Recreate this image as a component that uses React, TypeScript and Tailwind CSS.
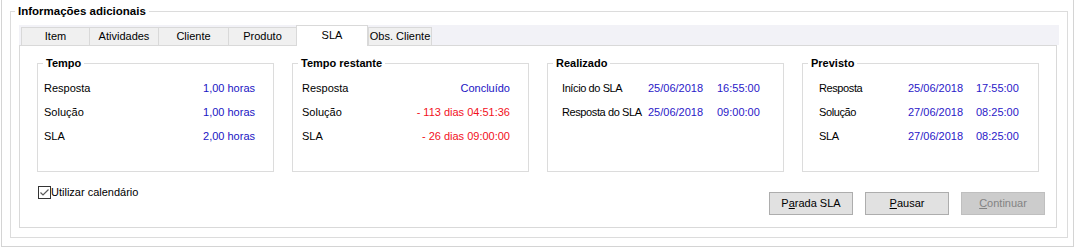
import type { ReactNode } from "react";

const tabs = [
  { label: "Item", w: "w-[68px]" },
  { label: "Atividades", w: "w-[69px]" },
  { label: "Cliente", w: "w-[70px]" },
  { label: "Produto", w: "w-[68px]" },
  { label: "SLA", w: "w-[72px]", active: true },
  { label: "Obs. Cliente", w: "w-[64px]", last: true },
];

function Box({ title, children, className = "" }: { title: string; children: ReactNode; className?: string }) {
  return (
    <fieldset className="w-[237px] h-[116px] border border-[#dcdcdc]">
      <legend className="ml-[5px] px-[3px] font-bold leading-[14px]">{title}</legend>
      <div className={`pt-[6px] ${className}`}>{children}</div>
    </fieldset>
  );
}

function Row({ label, value, red }: { label: string; value: string; red?: boolean }) {
  return (
    <div className="h-[24px] flex items-center justify-between">
      <span>{label}</span>
      <span className={red ? "text-[#f2101c]" : "text-[#1a14c4]"}>{value}</span>
    </div>
  );
}

function DateRow({ label, date, time, cols }: { label: string; date: string; time: string; cols: string }) {
  return (
    <div className={`h-[24px] grid items-center ${cols}`}>
      <span className="whitespace-nowrap tracking-[-0.4px]">{label}</span>
      <span className="text-[#2a18c8]">{date}</span>
      <span className="text-[#2a18c8]">{time}</span>
    </div>
  );
}

function Button({ children, disabled }: { children: ReactNode; disabled?: boolean }) {
  return (
    <div
      className={
        disabled
          ? "w-[84px] h-[23px] border border-[#bfbfbf] bg-[#cccccc] text-[#838383] flex items-center justify-center"
          : "w-[84px] h-[23px] border border-[#adadad] bg-[#e1e1e1] flex items-center justify-center"
      }
    >
      {children}
    </div>
  );
}

export default function App() {
  return (
    <div className="w-[1076px] h-[250px] bg-white pl-[1px] text-[11px] text-black font-['Liberation_Sans',Arial,sans-serif]">
      <div className="w-[1073px] h-[247px] border-x border-b border-[#d4d4d4] pl-[8px] pt-[4px]">
        <fieldset className="w-[1058px] h-[234px] border border-[#dcdcdc]">
          <legend className="ml-[4px] px-[3px] font-bold text-[11.5px] leading-[14px]">Informações adicionais</legend>
          <div className="ml-[8px] mt-[7px] w-[1040px]">
            <div className="h-[20px] bg-[#f2f2f7] flex items-end pl-[2px] w-[1040px]">
              {tabs.map((t) =>
                t.active ? (
                  <div
                    key={t.label}
                    className={`${t.w} h-[21px] -mb-[1px] relative z-10 bg-white border-x border-t border-[#d9d9d9] flex items-start justify-center pt-[3px] leading-[13px]`}
                  >
                    {t.label}
                  </div>
                ) : (
                  <div
                    key={t.label}
                    className={`${t.w} h-[18px] bg-[#f0f0f0] border-l border-t border-[#d9d9d9] flex items-center justify-center ${t.last ? "border-r" : ""}`}
                  >
                    {t.label}
                  </div>
                )
              )}
            </div>
            <div className="w-[1038px] h-[183px] border border-[#d9d9d9] bg-white pl-[17px] pr-[11px] pt-[10px]">
              <div className="flex gap-[18px]">
                <Box title="Tempo" className="pl-[6px] pr-[18px]">
                  <Row label="Resposta" value="1,00 horas" />
                  <Row label="Solução" value="1,00 horas" />
                  <Row label="SLA" value="2,00 horas" />
                </Box>
                <Box title="Tempo restante" className="pl-[9px] pr-[18px]">
                  <Row label="Resposta" value="Concluído" />
                  <Row label="Solução" value="- 113 dias 04:51:36" red />
                  <Row label="SLA" value="- 26 dias 09:00:00" red />
                </Box>
                <Box title="Realizado" className="pl-[14px]">
                  <DateRow label="Início do SLA" date="25/06/2018" time="16:55:00" cols="grid-cols-[86px_69px_1fr]" />
                  <DateRow label="Resposta do SLA" date="25/06/2018" time="09:00:00" cols="grid-cols-[86px_69px_1fr]" />
                </Box>
                <Box title="Previsto" className="pl-[16px]">
                  <DateRow label="Resposta" date="25/06/2018" time="17:55:00" cols="grid-cols-[89px_68px_1fr]" />
                  <DateRow label="Solução" date="27/06/2018" time="08:25:00" cols="grid-cols-[89px_68px_1fr]" />
                  <DateRow label="SLA" date="27/06/2018" time="08:25:00" cols="grid-cols-[89px_68px_1fr]" />
                </Box>
              </div>
              <div className="mt-[13px] flex items-start justify-between">
                <label className="ml-[1px] mt-[1px] flex items-center leading-[13px]">
                  <span className="w-[13px] h-[13px] border border-[#333333] bg-white flex items-center justify-center">
                    <svg width="11" height="11" viewBox="0 0 11 11">
                      <polyline points="1.5,5.5 4,8 9.5,2.5" fill="none" stroke="#5a5a5a" strokeWidth="1.2" />
                    </svg>
                  </span>
                  <span>Utilizar calendário</span>
                </label>
                <div className="mt-[7px] flex gap-[12px]">
                  <Button>
                    <span>
                      P<span className="underline">a</span>rada SLA
                    </span>
                  </Button>
                  <Button>
                    <span>
                      <span className="underline">P</span>ausar
                    </span>
                  </Button>
                  <Button disabled>
                    <span>
                      <span className="underline">C</span>ontinuar
                    </span>
                  </Button>
                </div>
              </div>
            </div>
          </div>
        </fieldset>
      </div>
    </div>
  );
}
